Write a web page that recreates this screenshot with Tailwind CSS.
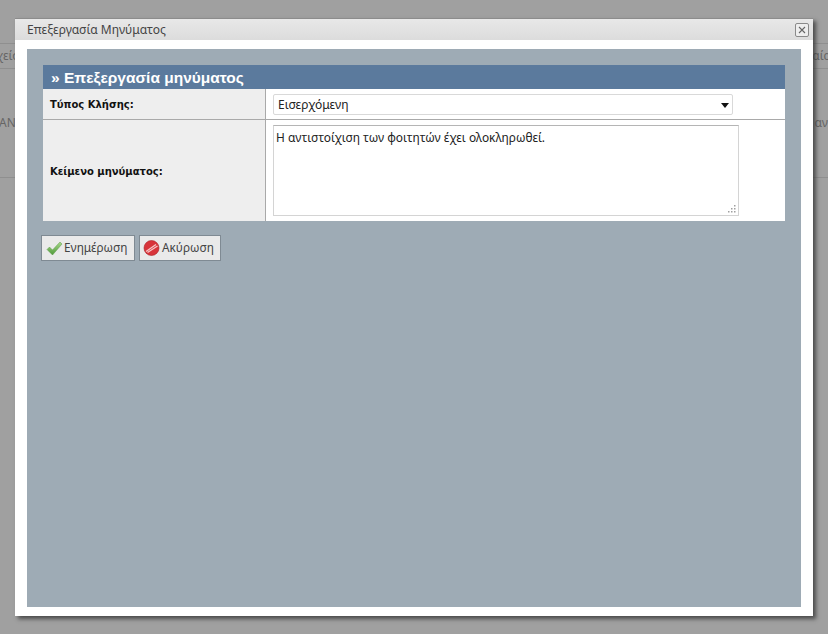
<!DOCTYPE html>
<html lang="el"><head><meta charset="utf-8">
<script src="https://cdn.jsdelivr.net/npm/@tailwindcss/browser@4"></script>
<title>Επεξεργασία Μηνύματος</title></head>
<body class="w-[828px] h-[634px] overflow-hidden bg-[#a0a0a0] relative font-['Noto_Sans',sans-serif]">
<!-- page behind the overlay -->
<div class="absolute left-0 top-[43px] w-full h-[26px] border-y border-[#8f8f8f] flex justify-between items-center text-[12px] text-[#666]"><span class="-ml-[4px]">χείο</span><span class="-mr-[3px]">αία</span></div>
<div class="absolute left-0 top-[114px] w-full flex justify-between text-[12px] text-[#666]"><span class="-ml-[1px]">ΑΝΙ</span><span class="mr-0">αν</span></div>
<div class="absolute left-0 top-[177px] w-full h-px bg-[#8f8f8f]"></div>

<div class="absolute left-[15px] top-[18px] w-[798px] h-[598px] bg-white flex flex-col shadow-[3px_3px_4px_rgba(50,50,50,0.75)] border-t border-[#8c8c8c]">
  <div class="h-[21px] shrink-0 bg-gradient-to-b from-[#e8e8e8] to-[#dcdcdc] flex items-center justify-between pl-[12px] pr-[4px] text-[12px] text-[#444]">
    <span>Επεξεργασία Μηνύματος</span>
    <span class="w-[14px] h-[14px] border border-[#8a8a8a] rounded-[2px] bg-[#eee] flex items-center justify-center">
      <svg width="8" height="8" viewBox="0 0 8 8" fill="none" stroke="#666" stroke-width="1.1"><path d="M1 1l6 6M7 1l-6 6"/></svg>
    </span>
  </div>
  <div class="flex-1 px-[12px] py-[9px] flex">
    <div class="flex-1 bg-[#9eabb5] pt-[16px] px-[16px] flex flex-col">
      <div class="h-[24px] shrink-0 bg-[#5b7a9d] text-white font-bold text-[15.5px] flex items-center pl-[8px] pt-[1px] font-['Liberation_Sans',sans-serif]">» Επεξεργασία μηνύματος</div>
      <div class="bg-white">
        <div class="flex h-[31px] border-b border-[#a9a9a9]">
          <div class="w-[223px] shrink-0 bg-[#eeeeee] border-r border-[#a9a9a9] pl-[7px] flex items-center text-[10px] font-bold text-[#111] font-['DejaVu_Sans',sans-serif]">Τύπος Κλήσης:</div>
          <div class="pl-[7px] pt-[5px]">
            <div class="w-[460px] h-[21px] border border-[#d9d9d9] rounded-[2px] bg-white flex items-center justify-between pl-[4px] pr-[3px] pt-[1px] text-[12px] text-[#222]">
              <span>Εισερχόμενη</span>
              <svg width="8" height="5" viewBox="0 0 8 5"><path d="M0 0h8L4 5z" fill="#111"/></svg>
            </div>
          </div>
        </div>
        <div class="flex h-[101px]">
          <div class="w-[223px] shrink-0 bg-[#eeeeee] border-r border-[#a9a9a9] pl-[7px] pt-[2px] flex items-center text-[10px] font-bold text-[#111] font-['DejaVu_Sans',sans-serif]">Κείμενο μηνύματος:</div>
          <div class="pl-[7px] pt-[5px]">
            <div class="relative w-[466px] h-[91px] border border-[#d4d4d4] border-t-[#b5b5b5] bg-white pl-[2px] pt-[3px] text-[11.9px] leading-[16px] text-[#222]">
              <span>Η αντιστοίχιση των φοιτητών έχει ολοκληρωθεί.</span>
              <svg class="absolute right-[1px] bottom-[1px]" width="9" height="9" viewBox="0 0 9 9" fill="#a0a0a0"><rect x="6" y="0" width="1.5" height="1.5"/><rect x="3" y="3" width="1.5" height="1.5"/><rect x="6" y="3" width="1.5" height="1.5"/><rect x="0" y="6" width="1.5" height="1.5"/><rect x="3" y="6" width="1.5" height="1.5"/><rect x="6" y="6" width="1.5" height="1.5"/></svg>
            </div>
          </div>
        </div>
      </div>
      <div class="flex gap-[4px] mt-[14px] -ml-[2px] text-[11.8px] text-[#444]">
        <div class="h-[26px] w-[94px] border border-[#7f8a93] bg-[#eaeaea] flex items-center pl-[4px] gap-[1px]">
          <svg width="17" height="15" viewBox="0 0 17 15"><defs><linearGradient id="g" x1="0" y1="0" x2="0" y2="1"><stop offset="0" stop-color="#a8d88a"/><stop offset="1" stop-color="#4f9a3a"/></linearGradient></defs><path d="M1 8.5l2.5-2.5 3 3L14 1l2 2-9.5 11z" fill="url(#g)" stroke="#5f9a4a" stroke-width=".5"/></svg>
          <span>Ενημέρωση</span>
        </div>
        <div class="h-[26px] w-[82px] border border-[#7f8a93] bg-[#eaeaea] flex items-center pl-[3px] gap-[2px]">
          <svg width="17" height="16" viewBox="0 0 17 16"><circle cx="8.5" cy="8" r="7.5" fill="#d8343a" stroke="#a82025" stroke-width=".6"/><path d="M3 11.5L13 4.5M4.5 12.5L14.5 6" stroke="#f6c4c4" stroke-width="1.4" fill="none"/></svg>
          <span>Ακύρωση</span>
        </div>
      </div>
    </div>
  </div>
</div>
</body></html>
